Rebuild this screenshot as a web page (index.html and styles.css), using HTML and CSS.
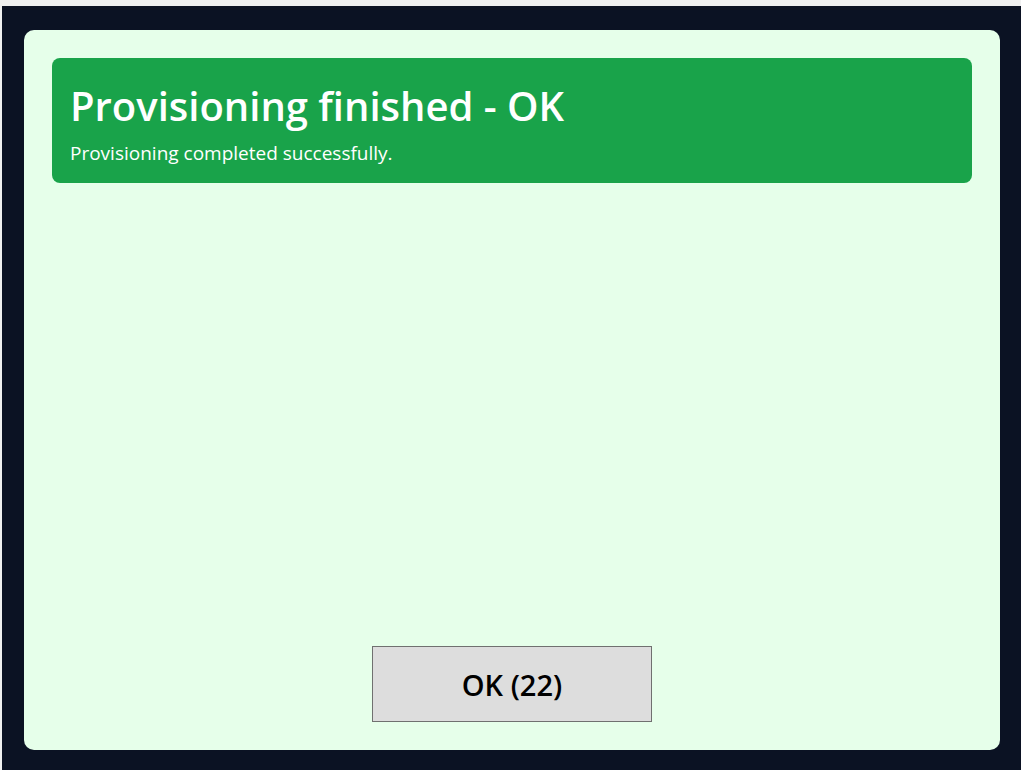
FILE: index.html
```html
<!DOCTYPE html>
<html lang="en">
<head>
    <meta charset="UTF-8">
    <meta name="viewport" content="width=device-width, initial-scale=1.0">
    <title>Provisioning</title>
    <link rel="stylesheet" href="styles.css">
</head>
<body>
    <div class="screen">
        <div class="card">
            <div class="banner">
                <h1 class="banner-title">Provisioning finished - OK</h1>
                <p class="banner-text">Provisioning completed successfully.</p>
            </div>
            <button class="ok-button">OK (22)</button>
        </div>
    </div>
</body>
</html>
```

FILE: styles.css
```css
html, body{
    margin: 0;
    height: 100%;
}
body{
    display: flex;
    box-sizing: border-box;
    padding: 6px 0 0 2px;
    background: #f0f0f0;
    font-family: "Open Sans", "Noto Sans", sans-serif;
}
.screen{
    flex: 1;
    display: flex;
    padding: 24px 21px 20px 22px;
    background: #0b1223;
}
.card{
    flex: 1;
    display: flex;
    flex-direction: column;
    align-items: center;
    padding: 28px;
    background: #e6ffea;
    border-radius: 10px;
}
.banner{
    align-self: stretch;
    height: 125px;
    box-sizing: border-box;
    padding: 20px 18px 0 18px;
    background: #19a34a;
    border-radius: 8px;
    color: #fff;
}
.banner-title{
    margin: 0;
    font-size: 40px;
    font-weight: 600;
    line-height: 56px;
}
.banner-text{
    margin: 8px 0 0 0;
    font-size: 19px;
    line-height: 22px;
}
.ok-button{
    margin-top: auto;
    width: 280px;
    height: 76px;
    background: #dddddd;
    border: 1px solid #707070;
    border-radius: 0;
    font-family: inherit;
    font-size: 29px;
    font-weight: 600;
    color: #000;
}
```
